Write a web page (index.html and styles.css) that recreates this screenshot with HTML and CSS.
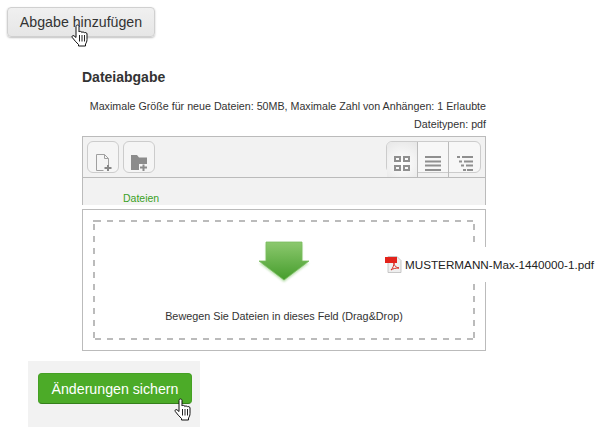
FILE: index.html
```html
<!DOCTYPE html>
<html lang="de">
<head>
<meta charset="utf-8">
<title>Dateiabgabe</title>
<link rel="stylesheet" href="styles.css">
</head>
<body>
<svg class="defs" width="0" height="0" aria-hidden="true">
  <defs>
    <symbol id="hand" viewBox="0 0 18 22">
      <path d="M6.500 .5c1 0 1.500 .7 1.500 1.500V7.500c.3-.8 2.500-.8 2.800 0v.5c.4-.7 2.300-.7 2.600 .3c.5-.5 2.600-.4 2.600 1.200V15c0 2-.8 3.500-1.500 4.500V21.500H7.500V20C5.500 18 3 15.500 1.300 13c-.8-1.200 .4-2.500 1.700-1.700L5 13V2c0-.8 .6-1.500 1.500-1.500z" fill="#fff" stroke="#111" stroke-width="1" stroke-linejoin="round"/>
      <path d="M8.500 10.500v6.500M11 10.500v6.500M13.500 10.500v6.500" stroke="#222" stroke-width="1" fill="none"/>
    </symbol>
  </defs>
</svg>

<main class="page">
  <div class="add-row">
    <button class="btn-add" type="button">Abgabe hinzufügen</button>
    <svg class="hand hand-add"><use href="#hand"/></svg>
  </div>

  <section class="submission">
    <h3 class="title">Dateiabgabe</h3>
    <p class="limits">Maximale Größe für neue Dateien: 50MB, Maximale Zahl von Anhängen: 1 Erlaubte</p>
    <p class="types">Dateitypen: pdf</p>

    <div class="manager">
      <div class="toolbar">
        <div class="tool-left">
          <span class="tool">
            <svg width="17" height="17" viewBox="0 0 17 17">
              <path d="M1.500 .5h8l4 4v12h-12z" fill="none" stroke="#a0a0a0" stroke-width="1"/>
              <path d="M9.500 .5v4h4" fill="none" stroke="#a0a0a0" stroke-width="1"/>
              <path d="M8.500 11h8.500v6H8.500z" fill="#f5f5f5"/>
              <path d="M9.500 14h7M13 11v6" stroke="#888" stroke-width="2" fill="none"/>
            </svg>
          </span>
          <span class="tool">
            <svg width="17" height="17" viewBox="0 0 17 17">
              <path d="M0 1h6l2 2.500h8V16H0z" fill="#8c8c8c"/>
              <path d="M8 10h9v7H8z" fill="#f5f5f5"/>
              <path d="M9 13.500h7M12.500 10.500v6.500" stroke="#8c8c8c" stroke-width="2" fill="none"/>
            </svg>
          </span>
        </div>
        <div class="views">
          <span class="view view-active">
            <svg width="16" height="15" viewBox="0 0 16 15" fill="none" stroke="#8f8f8f" stroke-width="2">
              <rect x="1" y="1" width="5" height="4"/><rect x="10" y="1" width="5" height="4"/>
              <rect x="1" y="10" width="5" height="4"/><rect x="10" y="10" width="5" height="4"/>
            </svg>
          </span>
          <span class="view">
            <svg width="16" height="15" viewBox="0 0 16 15" stroke="#8f8f8f" stroke-width="2" fill="none">
              <path d="M0 1h16M0 5.500h16M0 9.500h16M0 14h16"/>
            </svg>
          </span>
          <span class="view view-last">
            <svg width="16" height="15" viewBox="0 0 16 15" stroke="#8f8f8f" stroke-width="2" fill="none">
              <path d="M0 1h3M5 1h11M2 5.500h3M7 5.500h9M4 9.500h3M9 9.500h7M6 14h3M10 14h6"/>
            </svg>
          </span>
        </div>
      </div>
      <div class="path"><span class="crumb">Dateien</span></div>
    </div>

    <div class="drop">
      <div class="dashed">
        <svg class="arrow" width="54" height="44" viewBox="0 0 54 44">
          <defs>
            <linearGradient id="ag" x1="0" y1="0" x2="0" y2="1">
              <stop offset="0" stop-color="#8cc86e"/>
              <stop offset="1" stop-color="#459d2c"/>
            </linearGradient>
            <filter id="ab" x="-20%" y="-20%" width="140%" height="150%">
              <feGaussianBlur stdDeviation="1.200"/>
            </filter>
          </defs>
          <path d="M9 4h36v19h7L27 42 2 23h7z" fill="#6dbb52" opacity=".45" filter="url(#ab)"/>
          <path d="M9 2h36v19h7L27 40 2 21h7z" fill="url(#ag)" stroke="#79bd5e" stroke-width=".8"/>
        </svg>
        <p class="drop-text">Bewegen Sie Dateien in dieses Feld (Drag&amp;Drop)</p>
      </div>
      <div class="drag-file">
        <svg width="17" height="17" viewBox="0 0 17 17">
          <path d="M3 .5h9l4 4v12H3z" fill="#efefef" stroke="#bbb" stroke-width=".8"/>
          <rect x="0" y="1" width="12" height="6" fill="#e3231b"/>
          <path d="M6 14c2-2 3-5 3-7 0 2 1 4 5 5-3 0-6 .5-8 2z" fill="none" stroke="#d9261c" stroke-width="1"/>
        </svg>
        <span>MUSTERMANN-Max-1440000-1.pdf</span>
      </div>
    </div>
  </section>

  <div class="save-area">
    <button class="btn-save" type="button">Änderungen sichern</button>
    <svg class="hand hand-save"><use href="#hand"/></svg>
  </div>
</main>
</body>
</html>
```
FILE: styles.css
```css
* { box-sizing: border-box; }
html, body { margin: 0; padding: 0; background: #fff; }
body {
  width: 604px;
  height: 435px;
  overflow: hidden;
  font-family: "Liberation Sans", Arial, sans-serif;
  color: #333;
}
.defs { position: absolute; }
.page { padding: 7px 0 0 7px; }
.add-row { position: relative; height: 30px; width: 148px; }
.btn-add {
  display: block;
  width: 148px;
  height: 30px;
  padding: 0;
  font: 14.200px "Liberation Sans", Arial, sans-serif;
  color: #333;
  background: linear-gradient(#f0f0f0, #e6e6e6);
  border: 1px solid #d0d0d0;
  border-radius: 4px;
  box-shadow: 0 1px 2px rgba(0,0,0,.25);
}
.hand { position: absolute; width: 18px; height: 23px; }
.hand-add { left: 64px; top: 17px; }
.submission { margin: 33px 0 0 75px; width: 404px; position: relative; }
.title {
  margin: 0;
  font-size: 14px;
  line-height: 15px;
  font-weight: bold;
  color: #333;
}
.limits, .types {
  margin: 0;
  font-size: 10.700px;
  line-height: 12px;
  text-align: right;
  color: #333;
}
.limits { margin-top: 15px; }
.types { margin-top: 6px; }
.manager {
  margin-top: 6px;
  background: #f2f2f2;
  border: 1px solid #bbb;
  border-bottom: 0;
  height: 69px;
}
.toolbar {
  display: flex;
  justify-content: space-between;
  height: 41px;
  padding: 4px 4px 0;
  border-bottom: 1px solid #bbb;
}
.tool-left { display: flex; gap: 4px; }
.tool {
  display: flex;
  align-items: flex-end;
  justify-content: center;
  width: 32px;
  height: 32px;
  padding-bottom: 1px;
  background: #f5f5f5;
  border: 1px solid #ccc;
  border-radius: 6px;
}
.views {
  display: flex;
  height: 32px;
  border: 1px solid #ccc;
  border-radius: 6px;
  background: #f7f7f7;
}
.view {
  display: flex;
  align-items: center;
  justify-content: center;
  width: 31px;
  height: 35px;
  padding-top: 7px;
  border-right: 1px solid #bbb;
}
.view-active {
  background: radial-gradient(circle at 50% 60%, #fff, #e6e6e6);
  border-radius: 5px 0 0 0;
}
.view-last { border-right: 0; }
.path { padding: 14px 0 0 40px; }
.crumb { font-size: 10.500px; line-height: 12px; color: #3aa11f; display: block; }
.drop {
  position: relative;
  margin-top: 4px;
  height: 142px;
  padding: 10px;
  border: 1px solid #bbb;
}
.dashed {
  height: 120px;
  background:
    linear-gradient(#bbb, #bbb) 0 0 / 2px 2px no-repeat,
    linear-gradient(90deg, #bbb 6px, transparent 6px) 2px 0 / 12px 2px repeat-x,
    linear-gradient(90deg, #bbb 6px, transparent 6px) 2px 100% / 12px 2px repeat-x,
    linear-gradient(#bbb 6px, transparent 6px) 0 4px / 2px 12px repeat-y,
    linear-gradient(#bbb 6px, transparent 6px) 100% 4px / 2px 12px repeat-y;
  display: flex;
  flex-direction: column;
  align-items: center;
}
.arrow { margin-top: 20px; }
.drop-text { margin: 26px 0 0; font-size: 10.800px; line-height: 12px; color: #333; }
.drag-file {
  position: absolute;
  left: 297px;
  top: 37px;
  width: 225px;
  height: 35px;
  display: flex;
  align-items: center;
  gap: 3px;
  padding-left: 5px;
  background: #fff;
  font-size: 11.700px;
  color: #222;
}
.save-area {
  position: relative;
  margin: 10px 0 0 21px;
  width: 172px;
  height: 66px;
  padding: 12px 0 0 10px;
  background: #f2f2f2;
}
.btn-save {
  display: block;
  width: 154px;
  height: 31px;
  padding: 0;
  font: 14.200px "Liberation Sans", Arial, sans-serif;
  color: #fff;
  background: #4cab28;
  border: 1px solid #45a024;
  border-bottom-color: #357f1b;
  border-radius: 4px;
}
.hand-save { left: 146px; top: 37px; }
```
